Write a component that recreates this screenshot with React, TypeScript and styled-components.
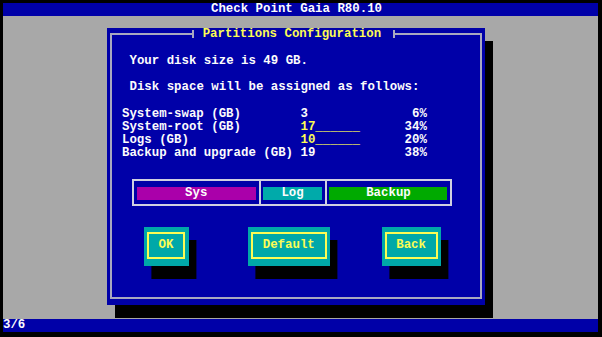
import { createGlobalStyle, styled } from 'styled-components'

const Global = createGlobalStyle`
body {
  margin: 0;
  background: #000;
}
`

const rows = [
    { label: 'System-swap (GB)', value: '3', pct: '6%', edit: false },
    { label: 'System-root (GB)', value: '17______', pct: '34%', edit: true },
    { label: 'Logs (GB)', value: '10______', pct: '20%', edit: true },
    { label: 'Backup and upgrade (GB)', value: '19', pct: '38%', edit: false },
]

const bars = [
    { name: 'Sys', color: '#aa00aa', width: 119 },
    { name: 'Log', color: '#00aaaa', width: 59 },
    { name: 'Backup', color: '#00aa00', width: 118 },
]

const buttons = [
    { text: 'OK', width: 44.7, gap: 0 },
    { text: 'Default', width: 81.7, gap: 59.6 },
    { text: 'Back', width: 59, gap: 52 },
]

const App = () => {
    return (
        <Screen>
            <Global />
            <TitleBar>Check Point Gaia R80.10</TitleBar>
            <Backdrop>
                <Dialog>
                    <Frame>
                        <Legend>
                            <Tick />
                            <Caption>Partitions Configuration</Caption>
                            <Tick />
                        </Legend>
                        <Intro>
                            <Line>Your disk size is 49 GB.</Line>
                            <Line>&nbsp;</Line>
                            <Line>Disk space will be assigned as follows:</Line>
                        </Intro>
                        <Table>
                            {rows.map(({ label, value, pct, edit }) => (
                                <Row key={label}>
                                    <span>{label}</span>
                                    <Value $edit={edit}>{value}</Value>
                                    <Pct>{pct}</Pct>
                                </Row>
                            ))}
                        </Table>
                        <BarBox>
                            {bars.map(({ name, color, width }, i) => (
                                <Cell key={name} $first={i === 0}>
                                    <Bar $color={color} $w={width}>{name}</Bar>
                                </Cell>
                            ))}
                        </BarBox>
                        <Buttons>
                            {buttons.map(({ text, width, gap }) => (
                                <Button key={text} $w={width} $gap={gap}>
                                    <ButtonFrame>{text}</ButtonFrame>
                                </Button>
                            ))}
                        </Buttons>
                    </Frame>
                </Dialog>
            </Backdrop>
            <StatusBar>3/6</StatusBar>
        </Screen>
    )
}

export default App

const Screen = styled.div`
width: 602px;
height: 337px;
box-sizing: border-box;
padding: 3px 4px 5px 3px;
background: #000;
display: flex;
flex-direction: column;
font-family: "Liberation Mono", "DejaVu Sans Mono", monospace;
font-size: 12.4px;
font-weight: 700;
color: #fcfcfc;
overflow: hidden;
`

const TitleBar = styled.div`
height: 13px;
line-height: 13px;
background: #0000a8;
text-align: center;
padding-right: 8px;
white-space: pre;
`

const StatusBar = styled.div`
height: 13px;
line-height: 13px;
background: #0000a8;
white-space: pre;
`

const Backdrop = styled.div`
flex: 1;
background: #a8a8a8;
padding: 11.5px 0 0 104px;
`

const Dialog = styled.div`
width: 378px;
height: 277.5px;
box-sizing: border-box;
background: #0000a8;
box-shadow: 8px 13px 0 #000;
padding: 0 3px 6px 3px;
display: flex;
flex-direction: column;
`

const Frame = styled.fieldset`
flex: 1;
margin: 0;
padding: 0;
min-width: 0;
border: 2px solid #a8a8c0;
display: flex;
flex-direction: column;
`

const Legend = styled.legend`
margin-left: 79.7px;
padding: 0;
height: 13px;
line-height: 13px;
white-space: pre;
`

const Tick = styled.span`
display: inline-block;
vertical-align: top;
width: 2px;
height: 8px;
margin-top: 2px;
background: #a8a8c0;
`

const Caption = styled.span`
display: inline-block;
vertical-align: top;
margin: 0 11.7px 0 9px;
color: #fcfc54;
`

const Intro = styled.div`
margin: 14.6px 0 0 17.5px;
line-height: 13.16px;
`

const Line = styled.div`
white-space: pre;
`

const Table = styled.div`
margin: 13.3px 0 0 10px;
line-height: 13.16px;
`

const Row = styled.div`
display: grid;
grid-template-columns: 24ch 8ch 9ch;
white-space: pre;
`

const Value = styled.span<{ $edit: boolean }>`
color: ${(p) => (p.$edit ? '#fcfc54' : '#fcfcfc')};
`

const Pct = styled.span`
text-align: right;
`

const BarBox = styled.div`
align-self: flex-start;
display: flex;
margin: 18.7px 0 0 20.3px;
border: 2px solid #d0d0e0;
`

const Cell = styled.div<{ $first: boolean }>`
border-left: ${(p) => (p.$first ? 'none' : '2px solid #d0d0e0')};
padding: 5.4px 3px 4px 2.4px;
`

const Bar = styled.div<{ $color: string; $w: number }>`
width: ${(p) => p.$w}px;
height: 13.3px;
line-height: 13.3px;
background: ${(p) => p.$color};
text-align: center;
`

const Buttons = styled.div`
display: flex;
margin: 20.7px 0 0 32px;
`

const Button = styled.div<{ $w: number; $gap: number }>`
width: ${(p) => p.$w}px;
height: 39.5px;
box-sizing: border-box;
margin-left: ${(p) => p.$gap}px;
padding: 5px 3.4px 6.7px 2.7px;
background: #00a8a8;
box-shadow: 7.4px 13px 0 #000;
display: flex;
`

const ButtonFrame = styled.div`
flex: 1;
border: 2px solid #fcfc54;
color: #fcfc54;
display: flex;
align-items: center;
justify-content: center;
`
